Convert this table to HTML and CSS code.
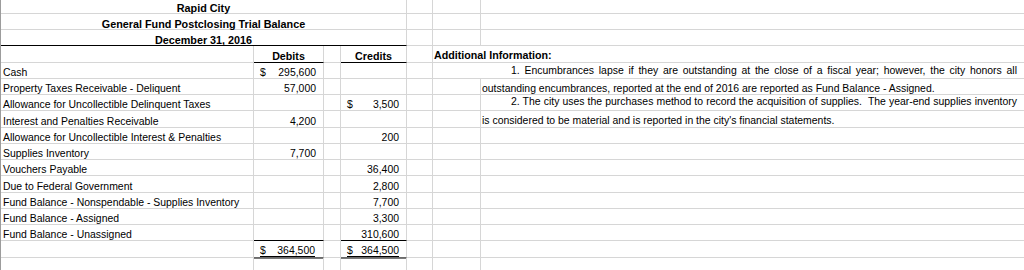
FILE: index.html
```html
<!DOCTYPE html>
<html>
<head>
<meta charset="utf-8">
<link rel="stylesheet" href="styles.css">
</head>
<body>
<div class="sheet">
  <div class="row">
    <div class="c title">Rapid City</div><div class="c"></div><div class="c"></div><div class="c g"></div>
  </div>
  <div class="row">
    <div class="c title">General Fund Postclosing Trial Balance</div><div class="c"></div><div class="c"></div><div class="c g"></div>
  </div>
  <div class="row">
    <div class="c title bk">December 31, 2016</div><div class="c"></div><div class="c"></div><div class="c g"></div>
  </div>
  <div class="row r4">
    <div class="c"></div><div class="c head bk">Debits</div><div class="c"></div><div class="c head bk">Credits</div><div class="c"></div><div class="c wide addl">Additional Information:</div>
  </div>
  <div class="row">
    <div class="c label">Cash</div><div class="c num"><span>$</span><span>295,600</span></div><div class="c"></div><div class="c"></div><div class="c"></div>
    <div class="c wide note n1"><span class="just">1. Encumbrances lapse if they are outstanding at the close of a fiscal year; however, the city honors all</span></div>
  </div>
  <div class="row">
    <div class="c label">Property Taxes Receivable - Deliquent</div><div class="c num"><span class="v">57,000</span></div><div class="c"></div><div class="c"></div><div class="c"></div><div class="c"></div>
    <div class="c g note n2">outstanding encumbrances, reported at the end of 2016 are reported as Fund Balance - Assigned.</div>
  </div>
  <div class="row">
    <div class="c label">Allowance for Uncollectible Delinquent Taxes</div><div class="c"></div><div class="c"></div><div class="c num"><span>$</span><span>3,500</span></div><div class="c"></div><div class="c"></div>
    <div class="c g note n3"><span class="just">2. The city uses the purchases method to record the acquisition of supplies.&nbsp; The year-end supplies inventory</span></div>
  </div>
  <div class="row">
    <div class="c label">Interest and Penalties Receivable</div><div class="c num"><span class="v">4,200</span></div><div class="c"></div><div class="c"></div><div class="c"></div><div class="c"></div>
    <div class="c g note n4">is considered to be material and is reported in the city's financial statements.</div>
  </div>
  <div class="row">
    <div class="c label">Allowance for Uncollectible Interest &amp; Penalties</div><div class="c"></div><div class="c"></div><div class="c num"><span class="v">200</span></div><div class="c"></div><div class="c"></div><div class="c g"></div>
  </div>
  <div class="row">
    <div class="c label">Supplies Inventory</div><div class="c num"><span class="v">7,700</span></div><div class="c"></div><div class="c"></div><div class="c"></div><div class="c"></div><div class="c g"></div>
  </div>
  <div class="row">
    <div class="c label">Vouchers Payable</div><div class="c"></div><div class="c"></div><div class="c num"><span class="v">36,400</span></div><div class="c"></div><div class="c"></div><div class="c g"></div>
  </div>
  <div class="row">
    <div class="c label">Due to Federal Government</div><div class="c"></div><div class="c"></div><div class="c num"><span class="v">2,800</span></div><div class="c"></div><div class="c"></div><div class="c g"></div>
  </div>
  <div class="row">
    <div class="c label">Fund Balance - Nonspendable - Supplies Inventory</div><div class="c"></div><div class="c"></div><div class="c num"><span class="v">7,700</span></div><div class="c"></div><div class="c"></div><div class="c g"></div>
  </div>
  <div class="row">
    <div class="c label">Fund Balance - Assigned</div><div class="c"></div><div class="c"></div><div class="c num"><span class="v">3,300</span></div><div class="c"></div><div class="c"></div><div class="c g"></div>
  </div>
  <div class="row">
    <div class="c label">Fund Balance - Unassigned</div><div class="c bk"></div><div class="c"></div><div class="c num bk"><span class="v">310,600</span></div><div class="c"></div><div class="c"></div><div class="c g"></div>
  </div>
  <div class="row">
    <div class="c"></div><div class="c tot dtot"><div class="u"><span>$</span><span>364,500</span></div></div><div class="c"></div><div class="c tot ctot"><div class="u"><span>$</span><span>364,500</span></div></div><div class="c"></div><div class="c"></div><div class="c g"></div>
  </div>
  <div class="row">
    <div class="c"></div><div class="c"></div><div class="c"></div><div class="c"></div><div class="c"></div><div class="c"></div><div class="c g"></div>
  </div>
</div>
</body>
</html>
```

FILE: styles.css
```css
html, body {
  margin: 0;
  padding: 0;
  background: #fff;
}
body {
  font-family: "Liberation Sans", Arial, sans-serif;
  font-size: 10.45px;
  color: #000;
  overflow: hidden;
}
.sheet {
  margin-top: -2.5px;
  border-left: 1px solid #9c9c9c;
}
.row {
  display: grid;
  grid-template-columns: 253px 70px 17px 66px 26px 48px 1fr;
  height: 16.25px;
}
.c {
  box-sizing: border-box;
  border-right: 1px solid #d6d6d6;
  border-bottom: 1px solid #d6d6d6;
  display: flex;
  align-items: flex-end;
  line-height: 10px;
  white-space: nowrap;
  min-width: 0;
}
.g {
  border-right: none;
}
.title {
  grid-column: span 4;
  justify-content: center;
  font-weight: bold;
  font-size: 10.8px;
}
.wide {
  grid-column: span 2;
  border-right: none;
}
.bk {
  border-bottom-color: #000;
}
.label {
  padding-left: 2px;
}
.num {
  justify-content: space-between;
  padding: 0 7px 0 6px;
}
.num .v {
  margin-left: auto;
}
.head {
  justify-content: center;
  font-weight: bold;
  font-size: 10.7px;
  padding-bottom: 1px;
}
.addl {
  font-weight: bold;
  font-size: 10.7px;
  padding-left: 1px;
  padding-bottom: 2px;
}
.note {
  padding-left: 1px;
}
.just {
  display: block;
  width: 506px;
  white-space: normal;
  text-align: justify;
  text-align-last: justify;
}
.n1 {
  padding-left: 78px;
  padding-bottom: 1.5px;
}
.n3 {
  padding-left: 30px;
  padding-bottom: 3px;
}
.n4 {
  padding-bottom: 1px;
}
.tot {
  border-bottom-color: #6a6a6a;
  box-shadow: 0 1px 0 #7a7a7a;
}
.u {
  flex: 1;
  display: flex;
  justify-content: space-between;
  border-bottom: 1px solid #000;
}
.dtot {
  padding: 0 8px 0 6px;
}
.ctot {
  padding: 0 7px 0 6px;
}
```
